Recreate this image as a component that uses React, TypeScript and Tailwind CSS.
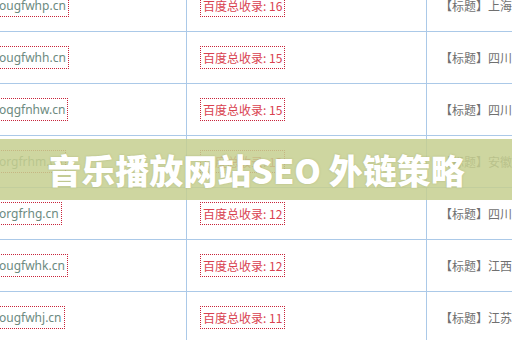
const rows = [
  { domain: "ougfwhp.cn", count: 16, region: "上海市音乐" },
  { domain: "ougfwhh.cn", count: 15, region: "四川省音乐" },
  { domain: "oqgfnhw.cn", count: 15, region: "四川省音乐" },
  { domain: "orgfrhm.cn", count: 13, region: "安徽省音乐" },
  { domain: "orgfrhg.cn", count: 12, region: "四川省音乐" },
  { domain: "ougfwhk.cn", count: 12, region: "江西省音乐" },
  { domain: "ougfwhj.cn", count: 11, region: "江苏省音乐" },
];

const latin = { fontFamily: '"Noto Sans", "Noto Sans CJK SC", sans-serif' };
const cjk = { fontFamily: '"Noto Sans CJK SC", "Noto Sans", sans-serif' };

export default function App() {
  return (
    <div className="relative w-[512px] h-[340px] overflow-hidden bg-white">
      {/* table */}
      <div className="-mt-[20px] flex flex-col">
        {rows.map((r) => (
          <div key={r.domain} className="flex h-[52px] shrink-0 border-b border-[#abc9e8]">
            <div className="w-[187px] shrink-0 flex items-center overflow-hidden border-r border-[#abc9e8]">
              <span
                className="-ml-[3px] pl-[1px] pr-[2px] py-[1px] leading-[19px] text-[12px] text-[#6c8a80] border border-dotted border-[#c8243a] whitespace-nowrap"
                style={latin}
              >
                {r.domain}
              </span>
            </div>
            <div className="w-[240px] shrink-0 flex items-center pl-[13px] border-r border-[#abc9e8]">
              <span
                className="px-[2px] py-[1px] leading-[19px] text-[12px] text-[#d9414f] border border-dotted border-[#c8243a] whitespace-nowrap"
                style={cjk}
              >
                百度总收录: {r.count}
              </span>
            </div>
            <div
              className="flex-1 flex items-center pl-[13px] text-[12px] text-[#707070] whitespace-nowrap overflow-hidden"
              style={cjk}
            >
              【标题】{r.region}
            </div>
          </div>
        ))}
      </div>

      {/* title band */}
      <div className="absolute left-0 right-0 top-[139px] h-[61px] flex items-center justify-center bg-[#c6cf8f]/85">
        <h1
          className="text-[34px] font-black text-white leading-none [text-shadow:0_0_2px_rgba(120,130,70,0.35)]"
          style={cjk}
        >
          音乐播放网站SEO 外链策略
        </h1>
      </div>
    </div>
  );
}
